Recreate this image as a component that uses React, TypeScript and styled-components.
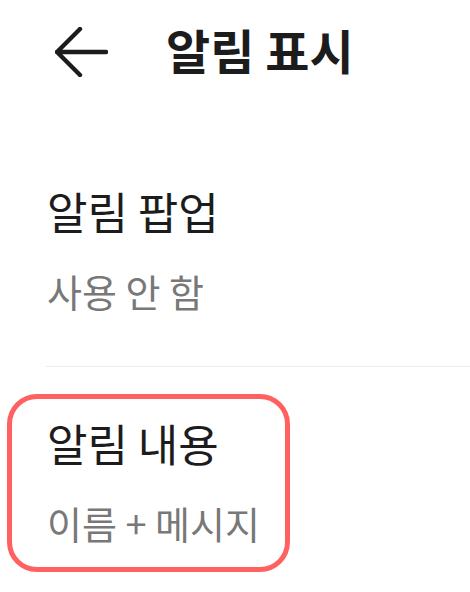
import React, {FC} from "react";
import styled, {createGlobalStyle} from "styled-components";

const GlobalStyle = createGlobalStyle`
  html, body {
    margin: 0;
    padding: 0;
    background: #ffffff;
  }
  body {
    font-family: "Noto Sans CJK KR", "Noto Sans", sans-serif;
    color: #1c1c1c;
  }
`;

const Page = styled.div`
  width: 470px;
  height: 592px;
  overflow: hidden;
  background: #ffffff;
`;

const Header = styled.div`
  display: flex;
  align-items: flex-start;
  height: 77px;
  padding: 27px 0 0 55px;
`;

const BackButton = styled.div`
  width: 53px;
  height: 50px;
  display: flex;
  align-items: center;
  justify-content: center;
  margin-right: 58px;
`;

const Title = styled.h1`
  margin: 0;
  font-size: 48px;
  line-height: 44px;
  font-weight: 700;
  color: #1c1c1c;
`;

const Divider = styled.div`
  height: 1px;
  background-color: #ededed;
  margin: 0 0 0 46px;
`;

const Item = styled.div<{highlighted?: boolean}>`
  display: flex;
  flex-direction: column;
  gap: 32px;
  padding: ${p => p.highlighted ? "18px 25px 22px 35px" : "0"};
  border: ${p => p.highlighted ? "5px solid #ff6161" : "none"};
  border-radius: 30px;
  width: max-content;
`;

const ItemTitle = styled.div`
  font-size: 44px;
  line-height: 52px;
  color: #1c1c1c;
`;

const ItemValue = styled.div`
  font-size: 38px;
  line-height: 44px;
  color: #787878;
`;

const FirstBlock = styled.div`
  padding: 81px 0 53px 47px;
`;

const SecondBlock = styled.div`
  padding: 27px 0 0 7px;
`;

const BackArrow: FC = () => (
    <svg width="53" height="50" viewBox="0 0 53 50" fill="none">
        <path d="M25 2 L2 25 L25 48 M2 25 H51" stroke="#1c1c1c" strokeWidth="4.4" strokeLinecap="round" strokeLinejoin="round"/>
    </svg>
);

const App: FC = () => {
    return (
        <Page>
            <GlobalStyle/>
            <Header>
                <BackButton>
                    <BackArrow/>
                </BackButton>
                <Title>알림 표시</Title>
            </Header>
            <FirstBlock>
                <Item>
                    <ItemTitle>알림 팝업</ItemTitle>
                    <ItemValue>사용 안 함</ItemValue>
                </Item>
            </FirstBlock>
            <Divider/>
            <SecondBlock>
                <Item highlighted>
                    <ItemTitle>알림 내용</ItemTitle>
                    <ItemValue>이름 + 메시지</ItemValue>
                </Item>
            </SecondBlock>
        </Page>
    )
};

export default App;
